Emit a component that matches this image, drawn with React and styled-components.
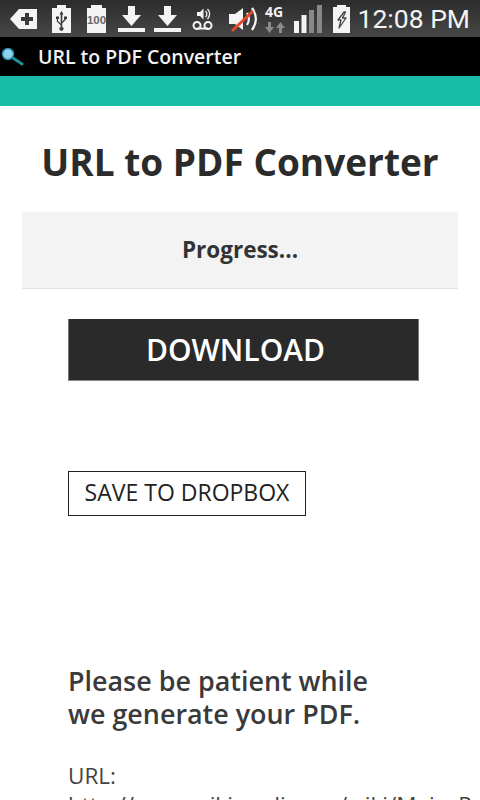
import React from 'react';
import styled, { createGlobalStyle } from 'styled-components';

const GlobalStyle = createGlobalStyle`
    html, body {
        margin: 0;
        padding: 0;
        background: #fff;
        overflow: hidden;
    }
    body {
        font-family: "Open Sans", "Liberation Sans", sans-serif;
    }
`;

const Screen = styled.div`
    width: 480px;
    height: 800px;
    overflow: hidden;
    display: flex;
    flex-direction: column;
    background: #fff;
`;

const StatusBar = styled.div`
    height: 37px;
    flex: none;
    display: flex;
    align-items: center;
    padding: 0 10px 0 10px;
    background: linear-gradient(#2c2c2c, #474747);
    color: #f4f4f4;
`;

const StatusIcon = styled.svg`
    flex: none;
    display: block;
    overflow: visible;
    margin-right: ${(p) => p.$gap}px;
`;

const Clock = styled.span`
    margin-left: auto;
    font-family: "Roboto", "Liberation Sans", sans-serif;
    font-size: 26.5px;
    white-space: nowrap;
`;

const ActionBar = styled.div`
    height: 39px;
    flex: none;
    display: flex;
    align-items: center;
    background: #000;
    padding-left: 1px;
`;

const AppTitle = styled.span`
    margin-left: 14px;
    color: #f2f2f2;
    font-size: 19.5px;
    font-weight: 600;
`;

const TealBand = styled.div`
    height: 30px;
    flex: none;
    background: #17bba6;
`;

const Heading = styled.h1`
    flex: none;
    margin: 33px 0 27px;
    text-align: center;
    color: #2b2b2b;
    font-size: 37px;
    line-height: 46px;
    font-weight: 700;
    white-space: nowrap;
`;

const ProgressBox = styled.div`
    flex: none;
    margin: 0 22px;
    height: 77px;
    box-sizing: border-box;
    display: flex;
    align-items: center;
    justify-content: center;
    padding-bottom: 2px;
    background: #f3f3f3;
    border-bottom: 1px solid #e3e3e3;
    color: #333;
    font-size: 22.5px;
    font-weight: 700;
`;

const Actions = styled.div`
    flex: none;
    padding: 30px 0 0 68px;
    display: flex;
    flex-direction: column;
    align-items: flex-start;
`;

const DownloadButton = styled.button`
    width: 351px;
    height: 62px;
    box-sizing: border-box;
    border: none;
    border-left: 1px solid #777;
    border-right: 1px solid #777;
    border-bottom: 1px solid #8a8a8a;
    background: #2a2a2a;
    color: #fff;
    font-family: inherit;
    font-size: 30px;
    font-weight: 600;
    padding: 0 16px 0 0;
`;

const DropboxButton = styled.button`
    margin-top: 90px;
    width: 238px;
    height: 45px;
    box-sizing: border-box;
    border: 1px solid #222;
    background: #fff;
    color: #222;
    font-family: inherit;
    font-size: 23px;
    padding: 0 0 4px;
`;

const Notice = styled.div`
    flex: none;
    padding: 148px 0 0 68px;
    color: #3a3a3a;
`;

const Patient = styled.p`
    margin: 0 0 31px;
    font-size: 26.9px;
    line-height: 33px;
    font-weight: 600;
`;

const UrlLine = styled.div`
    font-size: 22.5px;
    line-height: 29px;
    color: #444;
    white-space: nowrap;
`;

const Fill = 'currentColor';

const BackPlus = () => (
    <StatusIcon $gap={15} width="27" height="20" viewBox="0 0 27 20">
        <path fill={Fill} fillRule="evenodd" d="M0 10 9 0h18v20H9zM15 4v4h-4v4h4v4h4v-4h4V8h-4V4z" />
    </StatusIcon>
);

const UsbCard = () => (
    <StatusIcon $gap={16} width="19" height="28" viewBox="0 0 19 28">
        <path fill={Fill} fillRule="evenodd" d="M5 0h9v3h5v25H0V3h5zM9.500 6 7.500 9.500h1.200v9L6 16v-2h1v-2.500H4V14h.8v2.600L8.700 20.300V22a2 2 0 1 0 1.600 0v-3.800L14 14.800V14h1v-2.500h-3V14h.8L10.300 16.600V9.500H11.500z" />
    </StatusIcon>
);

const FullCard = () => (
    <StatusIcon $gap={12} width="19" height="28" viewBox="0 0 19 28">
        <path fill={Fill} d="M4 0h11v3h4v25H0V3h4z" />
        <text x="9.500" y="18.500" textAnchor="middle" fontSize="11.500" fontWeight="700" fontFamily="Liberation Sans" fill="#666">100</text>
    </StatusIcon>
);

const DownloadArrow = ({ gap }) => (
    <StatusIcon $gap={gap} width="27" height="26" viewBox="0 0 27 26">
        <path fill={Fill} d="M10 0h7v9h6L13.500 20 4 9h6zM0 22h27v4H0z" />
    </StatusIcon>
);

const Voicemail = () => (
    <StatusIcon $gap={16} width="21" height="22" viewBox="0 0 21 22">
        <path fill={Fill} d="M5 4h3l3.500-3.500v11L8 8H5z" />
        <path fill="none" stroke={Fill} strokeWidth="1.300" d="M13.500 3a4 4 0 0 1 0 6M15.500 1a7 7 0 0 1 0 10" />
        <circle cx="5" cy="17.500" r="3.500" fill="none" stroke={Fill} strokeWidth="2" />
        <circle cx="16" cy="17.500" r="3.500" fill="none" stroke={Fill} strokeWidth="2" />
        <path stroke={Fill} strokeWidth="2" d="M5 20.500h11" />
    </StatusIcon>
);

const Muted = () => (
    <StatusIcon $gap={7} width="29" height="24" viewBox="0 0 29 24">
        <path fill={Fill} d="M0 7h6l8-6v22l-8-6H0z" />
        <path fill="none" stroke={Fill} strokeWidth="2.200" d="M18 6c2.500 4 2.500 8 0 12M23 1c5 7 5 15 0 22" />
        <path stroke="#e8482a" strokeWidth="3" d="M3 24 24 4" />
    </StatusIcon>
);

const Network = () => (
    <StatusIcon $gap={9} width="20" height="28" viewBox="0 0 20 28">
        <text x="0" y="12" fontSize="14" fontWeight="700" fontFamily="Open Sans" fill={Fill}>4G</text>
        <path fill="#8b8b8b" d="M3 17h3v5h3l-4.500 6L0 22h3zM14 28h3v-5h3l-4.500-6-4.500 6h3z" />
    </StatusIcon>
);

const Signal = () => (
    <StatusIcon $gap={11} width="28" height="28" viewBox="0 0 28 28">
        <path fill={Fill} d="M0 16h5v12H0zM7.500 10h5v18h-5z" />
        <path fill="#888" d="M15 5h5v23h-5zM23 0h5v28h-5z" />
    </StatusIcon>
);

const Charging = () => (
    <StatusIcon $gap={0} width="17" height="28" viewBox="0 0 17 28">
        <path fill={Fill} d="M4 0h9v2h4v26H0V2h4z" />
        <path fill="none" stroke="#444" strokeWidth="1.300" strokeLinejoin="round" d="M11 7 5 15h3L6 23l7-10H9.500L12.500 7z" />
    </StatusIcon>
);

const SearchGlyph = () => (
    <svg width="23" height="20" viewBox="0 0 23 20">
        <circle cx="7" cy="7" r="5.500" fill="#8fd4ec" stroke="#2d8fb0" strokeWidth="1.500" />
        <path stroke="#1f8f9c" strokeWidth="3" strokeLinecap="round" d="M12 11l9 6" />
    </svg>
);

const App = () => {
    return (
        <Screen>
            <GlobalStyle />
            <StatusBar>
                <BackPlus />
                <UsbCard />
                <FullCard />
                <DownloadArrow gap={9} />
                <DownloadArrow gap={11} />
                <Voicemail />
                <Muted />
                <Network />
                <Signal />
                <Charging />
                <Clock>12:08 PM</Clock>
            </StatusBar>
            <ActionBar>
                <SearchGlyph />
                <AppTitle>URL to PDF Converter</AppTitle>
            </ActionBar>
            <TealBand />
            <Heading>URL to PDF Converter</Heading>
            <ProgressBox>Progress...</ProgressBox>
            <Actions>
                <DownloadButton>DOWNLOAD</DownloadButton>
                <DropboxButton>SAVE TO DROPBOX</DropboxButton>
            </Actions>
            <Notice>
                <Patient>Please be patient while<br />we generate your PDF.</Patient>
                <UrlLine>URL:</UrlLine>
                <UrlLine>http://www.wikimedia.org/wiki/Main_Page</UrlLine>
            </Notice>
        </Screen>
    );
};

export default App;
